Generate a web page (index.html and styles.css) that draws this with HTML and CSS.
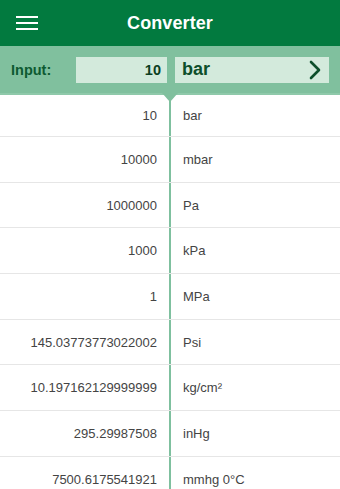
FILE: index.html
```html
<!DOCTYPE html>
<html>
<head>
<meta charset="utf-8">
<link rel="stylesheet" href="styles.css">
</head>
<body>
<div class="app">
  <header class="topbar">
    <svg class="menu" width="22" height="16" viewBox="0 0 22 16"><rect x="0" y="1" width="22" height="2" fill="#fff"/><rect x="0" y="7" width="22" height="2" fill="#fff"/><rect x="0" y="13" width="22" height="2" fill="#fff"/></svg>
    <div class="title">Converter</div>
  </header>
  <div class="inputbar">
    <div class="label">Input:</div>
    <div class="valuebox">10</div>
    <div class="unitbox"><span>bar</span>
      <svg width="14" height="20" viewBox="0 0 14 20"><path d="M3 2 L11 10 L3 18" fill="none" stroke="#0d4f2b" stroke-width="2.6" stroke-linecap="round" stroke-linejoin="round"/></svg>
    </div>
  </div>
  <div class="list">
    <div class="pointer"></div>
    <div class="row first"><div class="num">10</div><div class="unit">bar</div></div>
    <div class="row"><div class="num">10000</div><div class="unit">mbar</div></div>
    <div class="row"><div class="num">1000000</div><div class="unit">Pa</div></div>
    <div class="row"><div class="num">1000</div><div class="unit">kPa</div></div>
    <div class="row"><div class="num">1</div><div class="unit">MPa</div></div>
    <div class="row"><div class="num">145.03773773022002</div><div class="unit">Psi</div></div>
    <div class="row"><div class="num">10.197162129999999</div><div class="unit">kg/cm²</div></div>
    <div class="row"><div class="num">295.29987508</div><div class="unit">inHg</div></div>
    <div class="row"><div class="num">7500.6175541921</div><div class="unit">mmhg 0°C</div></div>
  </div>
</div>
</body>
</html>
```
FILE: styles.css
```css
html, body { margin: 0; padding: 0; background: #fff; }
body { font-family: "Liberation Sans", Arial, sans-serif; width: 340px; height: 489px; overflow: hidden; }
.app { width: 340px; }
.topbar { height: 46px; background: #027a3f; display: flex; align-items: center; justify-content: center; position: relative; }
.menu { position: absolute; left: 16px; top: 15px; }
.title { color: #fff; font-size: 18px; font-weight: bold; letter-spacing: 0.1px; }
.inputbar { height: 49px; background: #80c09e; display: flex; align-items: center; padding: 0 11px 0 11px; box-sizing: border-box; border-bottom: 2px solid #8fc9aa; }
.label { width: 65px; font-size: 14.5px; font-weight: bold; color: #0d5a31; }
.valuebox { width: 91px; height: 26px; background: #d3eadc; box-sizing: border-box; padding-right: 6px; text-align: right; line-height: 26px; font-size: 14.5px; font-weight: bold; color: #0b3f22; }
.unitbox { margin-left: 8px; width: 154px; height: 26px; background: #d3eadc; display: flex; align-items: center; justify-content: space-between; padding: 0 7px 0 7px; box-sizing: border-box; }
.unitbox span { font-size: 18px; font-weight: bold; color: #0d4f2b; }
.unitbox svg { display: block; }
.list { position: relative; background: linear-gradient(to right, transparent 169px, #7fc09f 169px, #7fc09f 171px, transparent 171px); }
.pointer { position: absolute; left: 162px; top: -2px; width: 0; height: 0; border-left: 8px solid transparent; border-right: 8px solid transparent; border-top: 9px solid #80c09e; }
.row { height: 45.7px; box-sizing: border-box; border-bottom: 1px solid #e6e6e6; display: flex; align-items: center; font-size: 13px; color: #444; }
.row.first { height: 42px; }
.num { width: 157px; text-align: right; }
.unit { padding-left: 26px; }
```
